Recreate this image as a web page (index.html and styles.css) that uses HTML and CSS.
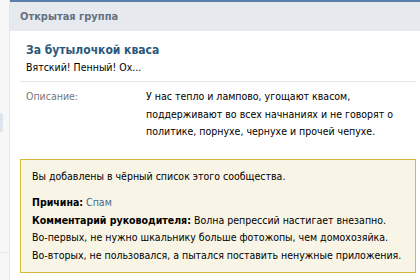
FILE: index.html
```html
<!DOCTYPE html>
<html lang="ru">
<head>
    <meta charset="UTF-8">
    <title>За бутылочкой кваса</title>
    <link rel="stylesheet" href="styles.css">
</head>
<body>
    <div class="page">
        <div class="sidebar">
            <div class="side-tab"></div>
            <div class="side-line"></div>
        </div>

        <div class="main">
            <div class="header">Открытая группа</div>

            <div class="group-info">
                <h1 class="group-name">За бутылочкой кваса</h1>
                <div class="group-status">Вятский! Пенный! Ох...</div>
            </div>

            <div class="info-row">
                <div class="info-label">Описание:</div>
                <div class="info-value">У нас тепло и лампово, угощают квасом,<br>поддерживают во всех начнаниях и не говорят о<br>политике, порнухе, чернухе и прочей чепухе.</div>
            </div>

            <div class="ban-box">
                <p class="ban-title">Вы добавлены в чёрный список этого сообщества.</p>
                <p><b>Причина:</b> <span class="reason">Спам</span></p>
                <p><b>Комментарий руководителя:</b> Волна репрессий настигает внезапно.<br>Во-первых, не нужно шкальнику больше фотожопы, чем домохозяйка.<br>Во-вторых, не пользовался, а пытался поставить ненужные приложения.</p>
            </div>
        </div>
    </div>
</body>
</html>
```

FILE: styles.css
```css
body {
    margin: 0;
    padding: 0;
    background-color: #f7f7f7;
    font-family: "DejaVu Sans Condensed", "DejaVu Sans", sans-serif;
    font-size: 10.5px;
    color: #000;
}

.page {
    display: flex;
    height: 280px;
}

.sidebar {
    width: 9px;
    border-right: 1px solid #e3e6ea;
    position: relative;
}

.side-tab {
    position: absolute;
    left: 0;
    top: 113px;
    width: 3px;
    height: 19px;
    background-color: #dfe5ec;
    border-radius: 0 3px 3px 0;
}

.side-line {
    position: absolute;
    left: 0;
    top: 252px;
    width: 9px;
    height: 1px;
    background-color: #e6e6e6;
}

.main {
    flex: 1;
    background-color: #fff;
    border-top: 2px solid #5b7ea6;
}

.header {
    background-color: #e6eaef;
    height: 29px;
    line-height: 30px;
    padding-left: 10px;
    font-size: 11px;
    font-weight: bold;
    color: #66717e;
}

.group-info {
    margin: 0 4px 0 10px;
    padding: 10px 6px 7px;
    border-bottom: 1px solid #e5e5e5;
}

.group-name {
    margin: 0;
    font-size: 12px;
    font-weight: bold;
    color: #2b587a;
    line-height: 18px;
}

.group-status {
    margin-top: 1px;
    line-height: 14px;
}

.info-row {
    display: flex;
    padding: 6px 0 0 16px;
    line-height: 17.5px;
}

.info-label {
    width: 120px;
    color: #777;
}

.info-value {
    width: 266px;
}

.ban-box {
    margin: 18px 4px 0 10px;
    border: 1px solid #d4b93c;
    background-color: #f9f5e6;
    padding: 8px 11px 8px;
    line-height: 17.5px;
}

.ban-box p {
    margin: 0;
}

.ban-box .ban-title {
    margin-bottom: 9px;
}

.reason {
    color: #45688e;
}
```
